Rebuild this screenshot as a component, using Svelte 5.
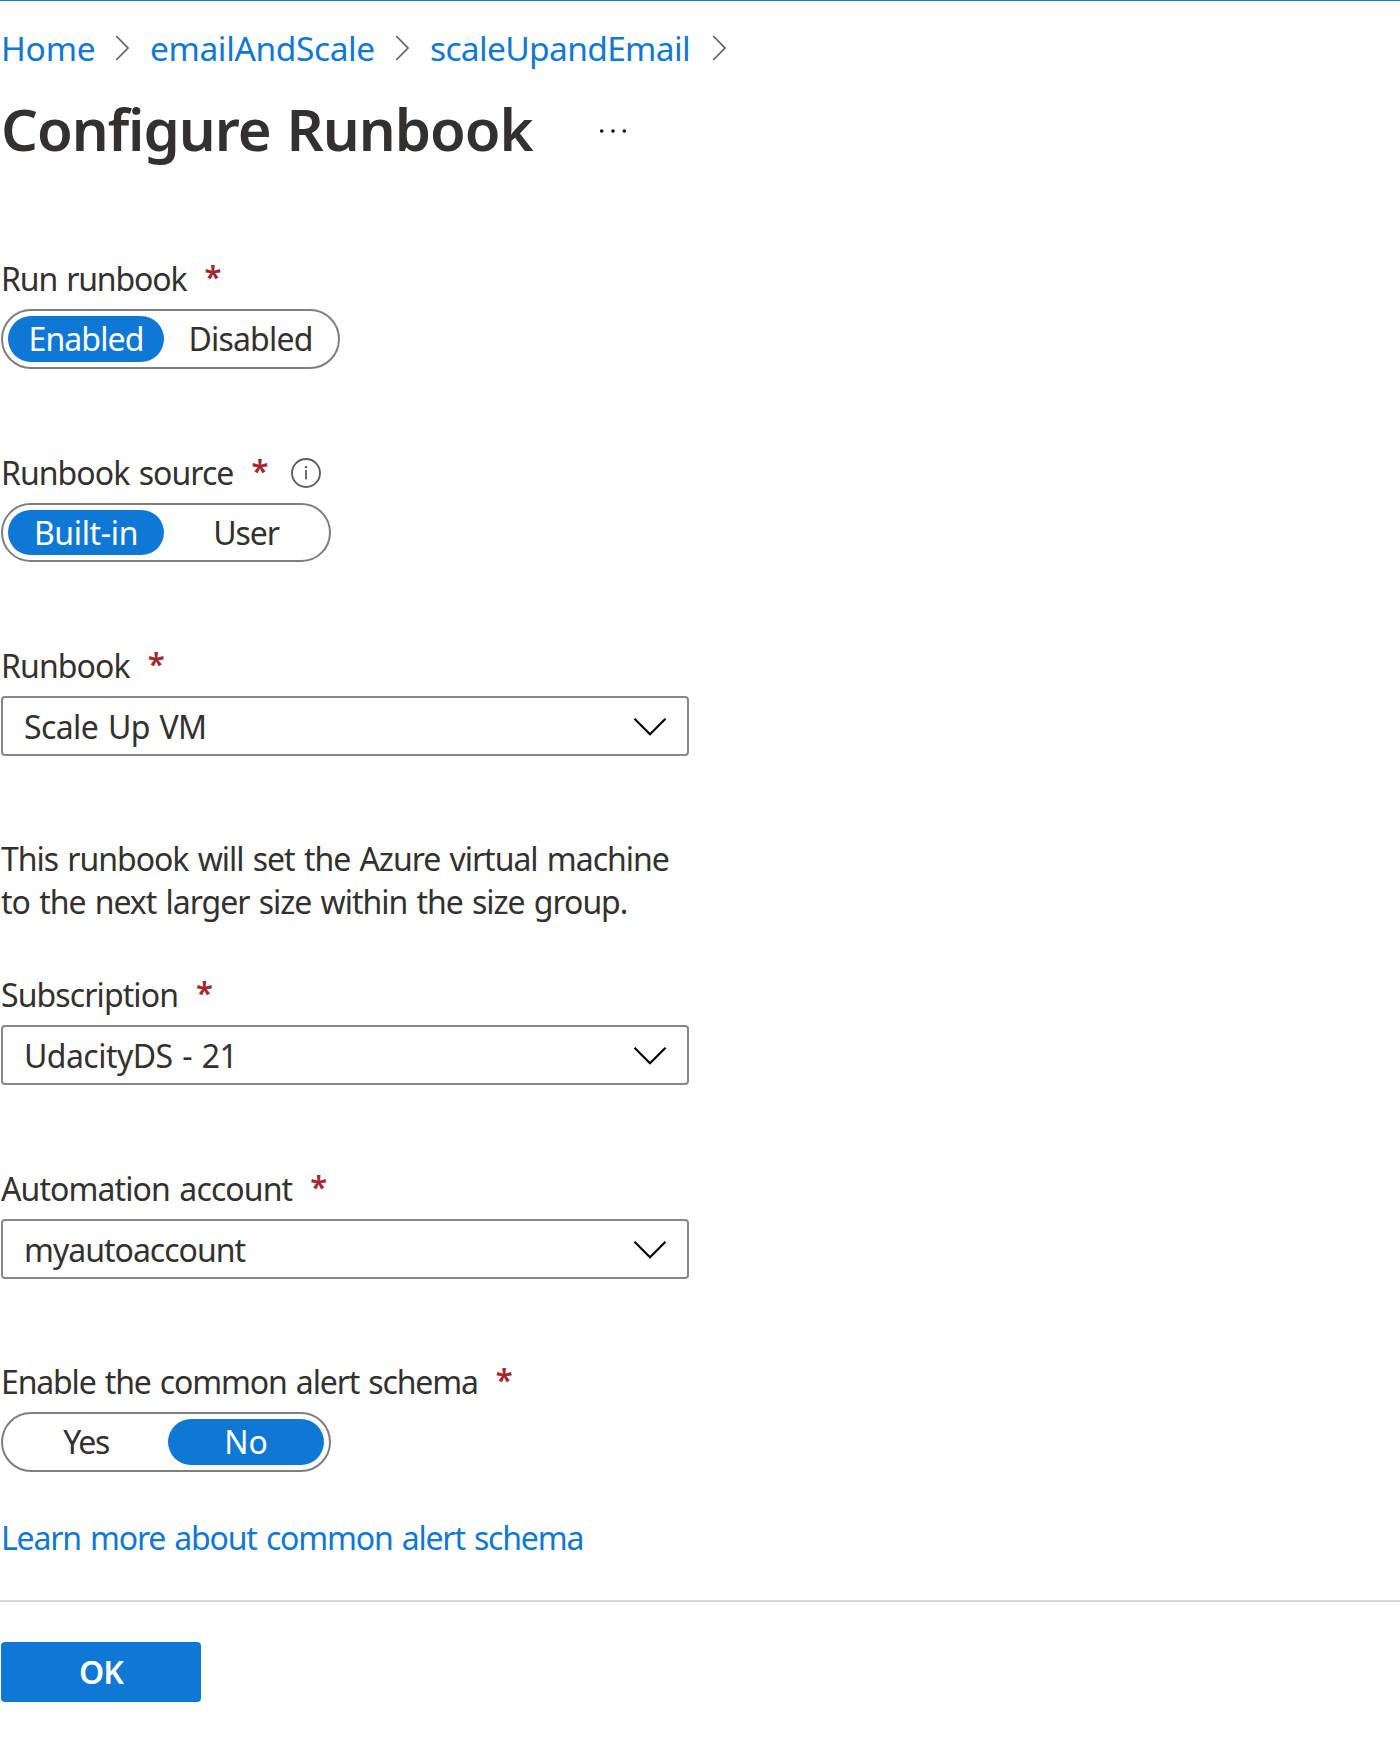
<script>
  const crumbs = [
    { text: 'Home', track: -0.2, cls: 'c1' },
    { text: 'emailAndScale', track: -0.38, cls: 'c2' },
    { text: 'scaleUpandEmail', track: -0.65, cls: 'c3' }
  ];
</script>

{#snippet label(text, track, info = false)}
  <div class="label">
    <span style:letter-spacing="{track}px">{text}</span>
    <span class="star">*</span>
    {#if info}
      <svg class="info" viewBox="0 0 32 32" width="32" height="32">
        <circle cx="16" cy="16" r="14" fill="none" stroke="#605e5c" stroke-width="1.9" />
        <rect x="15.1" y="13" width="1.8" height="9.4" fill="#605e5c" />
        <rect x="14.9" y="9" width="2.2" height="2.2" fill="#605e5c" />
      </svg>
    {/if}
  </div>
{/snippet}

{#snippet select(text, track)}
  <div class="select">
    <span style:letter-spacing="{track}px">{text}</span>
    <svg viewBox="0 0 34 20" width="34" height="20">
      <path d="M1.5 1.8 L17 17.3 L32.5 1.8" fill="none" stroke="#000" stroke-width="2.2" />
    </svg>
  </div>
{/snippet}

<main>
  <nav>
    {#each crumbs as c}
      <a class={c.cls} style:letter-spacing="{c.track}px">{c.text}</a>
      <svg viewBox="0 0 15 28" width="15" height="28">
        <path d="M1.2 2 L13 14 L1.2 26" fill="none" stroke="#605e5c" stroke-width="1.7" />
      </svg>
    {/each}
  </nav>

  <header>
    <h1>Configure Runbook</h1>
    <svg viewBox="0 0 30 8" width="30" height="8">
      <circle cx="3.7" cy="4" r="1.8" /><circle cx="15" cy="4" r="1.8" /><circle cx="26.3" cy="4" r="1.8" />
    </svg>
  </header>

  <section class="field first">
    {@render label('Run runbook', -1.15)}
    <div class="toggle wide">
      <span class="opt on" style:letter-spacing="-0.9px">Enabled</span>
      <span class="opt" style:letter-spacing="-0.8px">Disabled</span>
    </div>
  </section>

  <section class="field">
    {@render label('Runbook source', -0.95, true)}
    <div class="toggle short">
      <span class="opt on" style:letter-spacing="-0.35px">Built-in</span>
      <span class="opt" style:letter-spacing="-1.1px">User</span>
    </div>
  </section>

  <section class="field">
    {@render label('Runbook', -0.9)}
    {@render select('Scale Up VM', -0.6)}
  </section>

  <p class="description">
    <span style:letter-spacing="-1.03px">This runbook will set the Azure virtual machine</span>
    <span style:letter-spacing="-1.03px">to the next larger size within the size group.</span>
  </p>

  <section class="field tight">
    {@render label('Subscription', -0.9)}
    {@render select('UdacityDS - 21', -0.55)}
  </section>

  <section class="field">
    {@render label('Automation account', -0.9)}
    {@render select('myautoaccount', -1)}
  </section>

  <section class="field last">
    {@render label('Enable the common alert schema', -1.15)}
    <div class="toggle">
      <span class="opt" style:letter-spacing="-1.4px">Yes</span>
      <span class="opt on">No</span>
    </div>
  </section>

  <a class="learn">Learn more about common alert schema</a>

  <footer>
    <button>OK</button>
  </footer>
</main>

<style>
  :global(body) { margin: 0; background: #fff; }
  main {
    box-sizing: border-box;
    height: 1737px;
    border-top: 1px solid #0f78d4;
    display: flex;
    flex-direction: column;
    font-family: "Noto Sans", "Open Sans", sans-serif;
    font-size: 32px;
    line-height: 44px;
    color: #323130;
    white-space: nowrap;
    word-spacing: 2px;
    overflow: hidden;
  }
  a { color: #0f78d4; text-decoration: none; }
  nav {
    display: flex;
    align-items: center;
    height: 44px;
    margin-top: 25px;
    padding-left: 1px;
    font-size: 33.5px;
  }
  nav svg { flex: none; margin: 0 20px 0 0; }
  nav a { box-sizing: border-box; flex: none; }
  .c1 { width: 114px; }
  .c2 { width: 245px; }
  .c3 { width: 282px; }
  header { display: flex; align-items: center; height: 80px; margin-top: 21px; }
  h1 {
    margin: 0 0 4px;
    width: 597px;
    padding-left: 1px;
    font-size: 58px;
    line-height: 76px;
    font-weight: 600;
    letter-spacing: -1.05px;
  }
  header svg { fill: #111; }
  .field { margin-top: 81px; }
  .field.first { margin-top: 85px; }
  .field.tight { margin-top: 50px; }
  .field.last { margin-top: 80px; }
  .label {
    display: flex;
    box-sizing: border-box;
    height: 53px;
    padding-left: 1px;
    line-height: 46px;
  }
  .star {
    margin-left: 18px;
    font-size: 31px;
    font-weight: 600;
    line-height: 41px;
    color: #a4262c;
  }
  .info { margin: 7px 0 0 22px; }
  .toggle {
    box-sizing: border-box;
    display: flex;
    align-items: center;
    gap: 4px;
    width: 330px;
    height: 60px;
    margin-left: 1px;
    padding: 0 5px;
    border: 2px solid #7f7e7d;
    border-radius: 30px;
  }
  .toggle.wide { width: 339px; }
  .toggle.short { height: 59px; }
  .toggle.short .opt { height: 45px; line-height: 45px; }
  .opt {
    width: 156px;
    height: 46px;
    border-radius: 23px;
    line-height: 46px;
    text-align: center;
  }
  .wide .opt + .opt { width: 165px; }
  .on { background: #0f78d4; color: #fff; }
  .select {
    box-sizing: border-box;
    display: flex;
    align-items: center;
    justify-content: space-between;
    width: 688px;
    height: 60px;
    margin-left: 1px;
    padding: 2px 20px 0 21px;
    border: 2px solid #8a8886;
    border-radius: 4px;
  }
  .description { margin: 81px 0 -1px; padding-left: 1px; line-height: 43px; }
  .description span { display: block; }
  .learn { margin-top: 44px; padding-left: 1px; letter-spacing: -1.18px; }
  footer { margin-top: 40px; padding-top: 40px; border-top: 2px solid #d6d6d6; }
  button {
    display: block;
    width: 200px;
    height: 60px;
    margin-left: 1px;
    padding: 0 0 2px;
    border: 0;
    border-radius: 4px;
    background: #0f78d4;
    color: #fff;
    font: 600 32px "Noto Sans", sans-serif;
    letter-spacing: -1px;
  }
</style>
